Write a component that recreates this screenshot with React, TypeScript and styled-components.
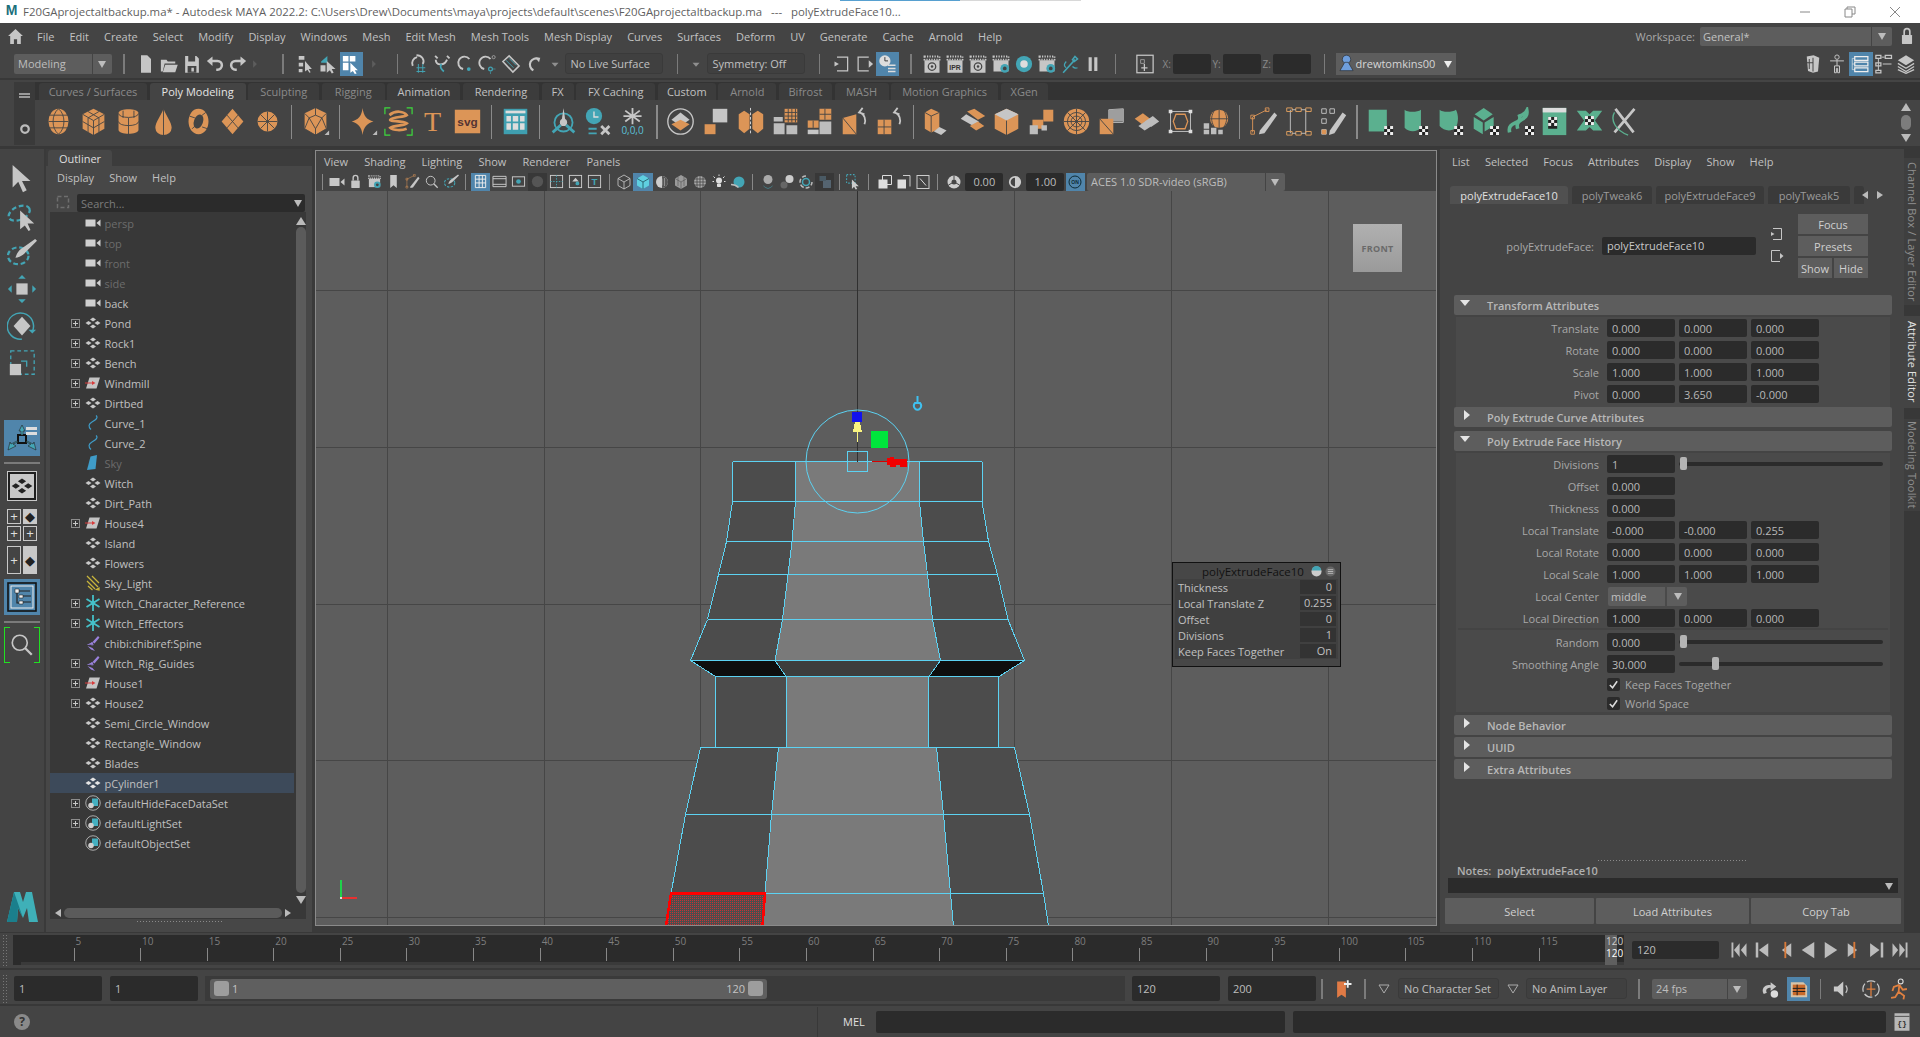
import React from 'react';
import styled, { createGlobalStyle } from 'styled-components';

const Global = createGlobalStyle`
  html, body { margin: 0; padding: 0; background: #3a3a3a; overflow: hidden; }
  * { box-sizing: border-box; }
`;

const O = '#dc9557';
const OD = '#444';
const T = '#43a5b5';
const L = '#c6c6c6';
const GR = '#5bb08f';

const check = (x: number, y: number) => (
  <g>
    <rect x={x} y={y} width="10" height="10" fill="#222" />
    <rect x={x} y={y} width="3.3" height="3.3" fill="#eee" />
    <rect x={x + 6.6} y={y} width="3.3" height="3.3" fill="#eee" />
    <rect x={x + 3.3} y={y + 3.3} width="3.3" height="3.3" fill="#eee" />
    <rect x={x} y={y + 6.6} width="3.3" height="3.3" fill="#eee" />
    <rect x={x + 6.6} y={y + 6.6} width="3.3" height="3.3" fill="#eee" />
  </g>
);
const ln = { stroke: OD, strokeWidth: 1, fill: 'none' } as const;

const icons: Record<string, React.ReactNode> = {
  // ---- shelf (32 box)
  sphere: <g><ellipse cx="16" cy="16" rx="11" ry="14" fill={O} /><path d="M16 2c-8 6-8 22 0 28M16 2c8 6 8 22 0 28M6 9h20M5 16h22M6 23h20" {...ln} /></g>,
  cube: <g><path d="M16 2l12 6v16l-12 7-12-7V8z" fill={O} /><path d="M4 8l12 7 12-7M16 15v16M10 5l12 7M22 5l-12 7M10 12v16M22 12v16M4 16l12 7 12-7" {...ln} /></g>,
  cyl: <g><path d="M5 7c0-6 22-6 22 0v18c0 6-22 6-22 0z" fill={O} /><path d="M5 7c0 6 22 6 22 0M5 16c0 6 22 6 22 0M16 12v18M10 4l0 8M22 4v8" {...ln} /></g>,
  cone: <g><path d="M16 2c3 8 9 15 9 21a9 8 0 0 1-18 0c0-6 6-13 9-21z" fill={O} /><path d="M16 2v29" {...ln} /></g>,
  torus: <g><path d="M16 2c7 0 11 7 11 14s-4 14-11 14S5 23 5 16 9 2 16 2z" fill={O} /><ellipse cx="16" cy="16" rx="5" ry="8" fill={OD} transform="rotate(20 16 16)" /><path d="M6 10l6 2M20 22l6 2M9 24l4-4M20 9l4-3" {...ln} /></g>,
  plane: <g><path d="M16 2l12 14-12 14L4 16z" fill={O} /><path d="M10 9l12 14M22 9L10 23" {...ln} /></g>,
  disc: <g><circle cx="16" cy="16" r="11" fill={O} /><path d="M5 16h22M16 5v22M8 8l16 16M24 8L8 24" {...ln} /></g>,
  plat: <g><path d="M16 1l12 6v17l-12 7-12-7V7z" fill={O} /><path d="M16 1v8M9 12l7-3 7 3-7 12zM4 7l5 5M28 7l-5 5M9 12l-5 12 12 7 12-7-5-12M16 24v7" {...ln} /><path d="M26 31h5v-5z" fill="#bbb" /></g>,
  star: <g><path d="M15 1c1 9 5 13 12 15-7 2-11 6-12 15-1-9-5-13-12-15 7-2 11-6 12-15z" fill={O} /><path d="M26 31h5v-5z" fill="#bbb" /></g>,
  helix: <g><path d="M1 8V1h6M25 1h6v7M1 24v7h6M25 31h6v-7" fill="none" stroke="#3ddc3d" strokeWidth="1.3" /><path d="M6 9c7-6 16-4 19 0-4 3-14 1-18 5-2 2 14 1 18 4-4 3-14 2-18 5 3 3 13 3 18 1" fill="none" stroke={O} strokeWidth="3" /></g>,
  tee: <text x="16" y="27" textAnchor="middle" fontFamily="'Liberation Serif', serif" fontSize="31" fill={O}>T</text>,
  svg: <g><rect x="2" y="3" width="28" height="26" fill={O} /><text x="16" y="21" textAnchor="middle" fontFamily="'Liberation Sans', sans-serif" fontWeight="700" fontSize="13" fill="#533">svg</text></g>,
  table: <g><rect x="3" y="2" width="26" height="28" fill="#3f9fb0" /><rect x="5" y="4" width="22" height="3" fill="#ddd" /><path d="M6 10h5v6H6zM13 10h6v6h-6zM21 10h5v6h-5zM6 18h5v7H6zM13 18h6v7h-6zM21 18h5v7h-5z" fill="#ddd" /></g>,
  pivot: <g><circle cx="16" cy="17" r="10" fill="none" stroke={T} strokeWidth="2" /><path d="M16 1l2 14h-4z" fill={L} /><circle cx="16" cy="17" r="4" fill={L} /><path d="M4 28l9-8M28 28l-9-8" stroke={T} strokeWidth="3" /></g>,
  clockx: <g><circle cx="11" cy="10" r="9" fill={T} /><path d="M11 5v6h5" stroke="#ddd" strokeWidth="1.5" fill="none" /><path d="M5 24h9M5 29h9" stroke={T} strokeWidth="2" /><path d="M19 21l9 9M28 21l-9 9" stroke={L} strokeWidth="3" /></g>,
  snow: <g><path d="M16 1v18M8 4l16 12M24 4L8 16M6 10h20" stroke={L} strokeWidth="2" /><text x="16" y="30" textAnchor="middle" fontFamily="'Open Sans', sans-serif" fontSize="11" fill="#5bc0d8">0,0,0</text></g>,
  merge: <g><circle cx="16" cy="16" r="14" fill="none" stroke={L} strokeWidth="1.5" /><path d="M16 6l10 8-10 7-10-7z" fill={L} /><path d="M16 14l10 5-10 7-10-7z" fill={O} /></g>,
  squares: <g><rect x="13" y="2" width="16" height="15" fill={L} /><rect x="4" y="19" width="12" height="11" fill={O} /></g>,
  mirror: <g><path d="M3 8l6-4 6 4v16l-6 5-6-5z" fill={O} /><path d="M18 8l6-4 6 4v16l-6 5-6-5z" fill={O} /><path d="M16 1v30" stroke="#ddd" strokeDasharray="3 2" /></g>,
  grid1: <g><path d="M15 2h14v15H15z" fill={O} /><path d="M3 18h12v12H3zM17 20h12v10H17zM3 11h10v5H3z" fill="#bdbdbd" /><path d="M15 6h14M15 10h14M15 14h14M19 2v15M23 2v15M27 2v15" {...ln} /></g>,
  grid2: <g><path d="M16 2h13v12H16zM3 15h12v8H3z" fill={O} /><path d="M16 16h13v14H16z" fill="#bdbdbd" /><path d="M3 25h12v5H3z" fill={L} /><path d="M22 2v12M16 8h13M9 15v8" {...ln} /></g>,
  rot1: <g><path d="M3 12L18 8v22H3z" fill={O} /><path d="M3 12l15 18" {...ln} /><path d="M22 6c5 2 7 8 5 13M25 1l-4 5 6 2" fill="none" stroke={L} strokeWidth="2" /></g>,
  rot2: <g><path d="M3 14h15v16H3z" fill={O} /><path d="M3 22h15M10 14v16" {...ln} /><path d="M22 6c5 2 7 8 5 13M25 1l-4 5 6 2" fill="none" stroke={L} strokeWidth="2" /></g>,
  extr: <g><path d="M9 2l9 4v18l-9 4-7-4V6z" fill={O} /><path d="M9 10v18M2 6l7 4 9-4" {...ln} /><path d="M18 22l8 4-6 5-8-4z" fill={L} /></g>,
  dia: <g><path d="M3 13l6-5 14 8-6 5z" fill={L} /><path d="M10 5l8-3 12 8-8 4zM13 21l9-5 7 5-9 5z" fill={O} /></g>,
  cube3: <g><path d="M16 2l13 6v16l-13 7-13-7V8z" fill={O} /><path d="M3 8l13 7 13-7-13-6z" fill={L} /><path d="M16 15v16" {...ln} /></g>,
  bridge: <g><path d="M18 3h11v13H18z" fill={O} /><path d="M6 14h12v10H6z" fill={O} /><path d="M3 20h9v10H3zM16 20h6v6h-6z" fill="#bdbdbd" /></g>,
  wheel: <g><circle cx="16" cy="16" r="14" fill={O} /><circle cx="16" cy="16" r="6" fill="none" stroke={OD} /><circle cx="16" cy="16" r="10" fill="none" stroke={OD} /><path d="M2 16h28M16 2v28M6 6l20 20M26 6L6 26" {...ln} /></g>,
  two: <g><path d="M13 3l16-1v15H13z" fill="none" stroke={L} /><path d="M13 3l16-1v14H13z" fill="#9e9e9e" /><path d="M3 13h15v17H3z" fill={O} /><path d="M3 13l15 17" {...ln} /></g>,
  dia2: <g><path d="M3 13l9-6 8 6-9 6z" fill={O} /><path d="M14 16l9-6 7 6-9 6zM7 21l9-6 7 5-9 6z" fill="#bdbdbd" /></g>,
  frame: <g><path d="M5 5h22v22H5z" fill="none" stroke={L} /><path d="M11 8h10l3 8-3 8H11l-3-8z" fill="none" stroke={O} strokeWidth="1.4" /><path d="M3 3h4v4H3zM25 3h4v4h-4zM3 25h4v4H3zM25 25h4v4h-4z" fill="#ddd" /></g>,
  gsph: <g><circle cx="20" cy="13" r="10" fill={O} /><path d="M10 13h20M20 3v20M14 5c-3 6-3 10 0 16M26 5c3 6 3 10 0 16" {...ln} /><path d="M3 18h6v6H3zM11 23h6v7h-6zM3 25h6v5H3zM19 25h5v5h-5z" fill="#bdbdbd" /></g>,
  pen1: <g><path d="M4 28V11L20 3" fill="none" stroke={O} /><path d="M2 26h4v4H2zM2 9h4v4H2zM18 1h4v4h-4z" fill="none" stroke={O} /><path d="M12 26l16-20 3 3-14 20-6 1z" fill={L} /></g>,
  pen2: <g><path d="M7 3v26M24 3v26" stroke={L} /><path d="M3 1h6v4H3zM13 1h6v4h-6zM24 1h6v4h-6zM3 27h6v4H3zM13 27h6v4h-6zM24 27h6v4h-6z" fill="none" stroke="#e6a360" /><path d="M9 3h4M19 3h5M9 29h4M19 29h5" stroke={L} /></g>,
  pen3: <g><path d="M3 2h5v5H3zM12 2h5v5h-5zM3 13h5v5H3zM3 25h5v5H3z" fill="none" stroke={L} /><path d="M3 25h5v5H3z" fill={O} /><path d="M12 26l14-20 4 3-13 20-6 2z" fill={L} /></g>,
  mk1: <g><path d="M3 3h20v24H3z" fill={GR} />{check(20, 21)}</g>,
  mk2: <g><path d="M4 3c3 3 14 3 18 0v20c-4 5-14 5-18 0z" fill={GR} />{check(20, 21)}</g>,
  mk3: <g><path d="M4 3c3 3 14 3 18 0 3 6 3 13 0 20-6 5-14 3-18-2z" fill={GR} />{check(20, 21)}</g>,
  mk4: <g><path d="M14 1l10 7-10 7L4 8z" fill={GR} /><path d="M3 11l10 6v13L3 24zM15 17l10-6v10l-10 6z" fill={GR} />{check(21, 21)}</g>,
  mk5: <g><path d="M4 28c-3-13 14-8 11-18 6-2 8-6 8-6 2 12-14 8-10 20" fill="none" stroke={GR} strokeWidth="4" />{check(21, 21)}</g>,
  mk6: <g><rect x="3" y="1" width="26" height="30" fill={GR} /><rect x="3" y="1" width="26" height="5" fill="#ddd" />{check(9, 11)}<rect x="9" y="21" width="10" height="3" fill="#222" /></g>,
  mk7: <g><path d="M2 4h10l4 4 4-4h10l-8 11 8 11H20l-4-4-4 4H2l8-11z" fill={GR} />{check(11, 10)}</g>,
  mk8: <g><path d="M5 28L27 2M6 2l20 26" stroke={L} strokeWidth="3" /><path d="M5 6C0 14 6 26 20 31" fill="none" stroke={GR} strokeWidth="1.5" /></g>,
  // ---- status line
  fnew: <path d="M8 2h10l6 6v22H8z" fill={L} />,
  fopen: <g><path d="M3 9h9l2 3h12v3H9l-3 13H3z" fill={L} /><path d="M10 17h20l-4 12H6z" fill={L} /></g>,
  fsave: <g><path d="M5 3h18l4 4v23H5z" fill={L} /><path d="M10 3h11v9H10zM9 19h14v11H9z" fill="#444" /><rect x="15" y="22" width="4" height="6" fill={L} /></g>,
  undo: <g><path d="M11 11h9a7 7 0 0 1 0 14h-2" fill="none" stroke={L} strokeWidth="4" /><path d="M12 4v15L3 11z" fill={L} /></g>,
  redo: <g><path d="M21 11h-9a7 7 0 0 0 0 14h2" fill="none" stroke={L} strokeWidth="4" /><path d="M20 4v15l9-8z" fill={L} /></g>,
  tri: <path d="M11 6l10 10-10 10z" fill="#5d5d5d" />,
  tdn: <path d="M8 13h16l-8 9z" fill="#8f8f8f" />,
  selH: <g><path d="M6 3h9v6H6zM6 14h7v6H6zM6 24h6v5H6z" fill={L} /><path d="M16 11v17l4-3 3 5 2-1-3-5h5z" fill={L} /></g>,
  selO: <g><path d="M5 12l10-9v11H5z" fill={T} /><path d="M14 11v19l5-4 3 5 3-1-3-6h6z" fill={L} /><path d="M4 18h8v10H4z" fill={L} /></g>,
  selC: <g><path d="M3 3h9v9H3zM14 3h9v9h-9zM3 14h9v12H3z" fill="#fff" /><path d="M15 14v16l4-3 3 5 3-1-3-5h5z" fill="#fff" /></g>,
  mag1: <g><path d="M13 5a10 10 0 0 0-7 14" fill="none" stroke={L} strokeWidth="3" /><path d="M12 2c8 0 14 7 10 14" fill="none" stroke={L} strokeWidth="3" /><path d="M12 22h14M12 28h14M15 16v14M22 16v14" stroke={T} strokeWidth="1.5" /></g>,
  mag2: <g><path d="M6 9c0 9 14 11 18 0" fill="none" stroke={L} strokeWidth="3" /><path d="M5 3l4 4M24 3l4 4" stroke={L} strokeWidth="3" /><path d="M15 16c-3 4 0 9 4 12" fill="none" stroke={T} strokeWidth="3" /></g>,
  mag3: <g><path d="M23 8a10 10 0 1 0-10 16" fill="none" stroke={L} strokeWidth="3" /><circle cx="22" cy="24" r="3" fill={T} /></g>,
  mag4: <g><path d="M20 8a10 10 0 1 0-10 16" fill="none" stroke={L} strokeWidth="3" /><circle cx="25" cy="5" r="2.5" fill="none" stroke={L} /><circle cx="20" cy="24" r="3" fill="none" stroke={T} strokeWidth="2" /><path d="M20 28v4M24 24h4" stroke={T} /></g>,
  mag5: <g><path d="M3 12l10-9 16 16-10 10z" fill="none" stroke={L} strokeWidth="2.4" /><path d="M8 10l12 12M13 7l11 11" stroke={T} strokeWidth="1.4" /></g>,
  mag6: <g><path d="M24 8A10 10 0 1 0 15 26" fill="none" stroke={L} strokeWidth="3.4" /><path d="M18 6l8 0-2 7z" fill={L} /></g>,
  inp: <g><path d="M8 5h17v22H8" fill="none" stroke={L} strokeWidth="2" /><path d="M4 12l7 4-7 4z" fill={L} /></g>,
  outp: <g><path d="M22 5H5v22h17" fill="none" stroke={L} strokeWidth="2" /><path d="M22 10l7 6-7 6z" fill={L} /></g>,
  hist: <g><circle cx="11" cy="11" r="9" fill="#ddd" /><path d="M11 5v6h5" stroke="#333" strokeWidth="1.5" fill="none" /><path d="M16 18h12M16 23h12M16 28h12" stroke="#ddd" strokeWidth="2.4" /></g>,
  clap: <g><path d="M4 4h24v5H4z" fill="none" stroke={L} strokeDasharray="2 2" strokeWidth="3" /><rect x="4" y="10" width="24" height="20" fill={L} /><circle cx="16" cy="20" r="6" fill="none" stroke="#444" strokeWidth="2" /><circle cx="16" cy="20" r="2" fill="#444" /></g>,
  clapI: <g><path d="M4 4h24v5H4z" fill="none" stroke={L} strokeDasharray="2 2" strokeWidth="3" /><rect x="4" y="10" width="24" height="20" fill={L} /><text x="16" y="25" textAnchor="middle" fontFamily="'Liberation Sans', sans-serif" fontSize="11" fontWeight="700" fill="#333">IPR</text></g>,
  clapG: <g><path d="M4 4h24v5H4z" fill="none" stroke={L} strokeDasharray="2 2" strokeWidth="3" /><rect x="4" y="10" width="24" height="18" fill={L} /><circle cx="22" cy="23" r="7" fill={T} /><circle cx="22" cy="23" r="3" fill="#444" /></g>,
  ring: <g><circle cx="16" cy="16" r="13" fill={T} /><circle cx="16" cy="16" r="6" fill="#ddd" /></g>,
  brk: <g><path d="M5 30L24 9M24 4l4 4-5 4-3-3z" stroke={T} strokeWidth="2.5" fill="none" /><path d="M10 12c-4 4-4 8 0 10M20 20c4 4 8 2 8 2" stroke={T} fill="none" strokeWidth="2" /></g>,
  pause: <path d="M9 5h5v22H9zM18 5h5v22h-5z" fill={L} />,
  lockin: <g><rect x="3" y="2" width="26" height="28" fill="none" stroke={L} strokeWidth="2" /><path d="M9 9h6v6H9z" fill="none" stroke={L} /><path d="M15 16v11M10 22h10" stroke={L} strokeWidth="2" /></g>,
  user: <g><circle cx="16" cy="9" r="7" fill="#6e9edc" stroke="#222" /><path d="M13 14h6l8 14H5z" fill="#6e9edc" stroke="#222" /></g>,
  head: <g><path d="M6 4l11-2 9 4-2 22-8 2-8-3z" fill={L} /><path d="M10 8v16M16 6v22M6 14h10" stroke="#444" strokeWidth="1.6" /></g>,
  hik: <g><circle cx="16" cy="5" r="3.5" fill="none" stroke={L} strokeWidth="1.5" /><path d="M5 11h22M16 9v10M12 19h8v11h-3v-7h-2v7h-3z" stroke={L} strokeWidth="1.6" fill="none" /></g>,
  attrs: <g><path d="M6 4h21v6H6zM6 13h21v6H6zM6 22h21v6H6z" fill="none" stroke="#eee" strokeWidth="2" /><path d="M2 7h4M2 7v18M2 16h4M2 25h4" stroke="#eee" /></g>,
  tool: <g><path d="M3 2h8v5H3zM18 2h10v5H18zM3 14h8v5H3zM3 26h8v4H3z" fill="none" stroke={L} strokeWidth="2" /><path d="M12 5h5M7 8v18M14 16h14" stroke={L} strokeWidth="1.6" /></g>,
  layers: <g><path d="M16 2l13 8-13 8-13-8z" fill={L} /><path d="M3 15l13 8 13-8M3 20l13 8 13-8M3 25l13 6 13-6" fill="none" stroke={L} strokeWidth="2" /></g>,
  wlock: <g><path d="M11 14v-6a5 5 0 0 1 10 0v6" fill="none" stroke={L} strokeWidth="3" /><rect x="7" y="14" width="18" height="16" rx="1" fill={L} /></g>,
  home: <path d="M16 2l14 13h-4v15h-7v-9h-6v9H6V15H2z" fill={L} />,
  // ---- toolbox
  select: <path d="M6 1v24l6-6 5 11 4-2-5-10h9z" fill={L} />,
  lasso: <g><ellipse cx="13" cy="13" rx="12" ry="7" transform="rotate(-25 13 13)" fill="none" stroke={T} strokeWidth="2.4" strokeDasharray="5 3" /><path d="M14 10v20l5-4 4 6 2-1-3-7h7z" fill={L} /></g>,
  paint: <g><ellipse cx="12" cy="19" rx="11" ry="9" fill="none" stroke={T} strokeWidth="2.4" strokeDasharray="5 3" /><path d="M30 1l2 2-12 12c-3 4-8 6-11 6 1-3 3-8 7-10z" fill={L} /></g>,
  move: <g><rect x="10" y="10" width="12" height="12" fill={L} /><path d="M16 1l4 4h-8zM16 31l4-4h-8zM1 16l4-4v8zM31 16l-4-4v8z" fill={T} /></g>,
  rotate: <g><path d="M16 6l9 10-9 10-9-10z" fill={L} /><path d="M27 22A14 14 0 1 0 16 30" fill="none" stroke={T} strokeWidth="1.6" /><path d="M23 20h8l-4 4z" fill={T} /></g>,
  scale: <g><rect x="4" y="3" width="25" height="25" fill="none" stroke={T} strokeWidth="1.4" strokeDasharray="4 3" /><rect x="3" y="17" width="12" height="12" fill={L} /><path d="M15 14h6v6" fill="none" stroke={T} strokeWidth="1.4" /></g>,
  manip: <g><rect x="12" y="13" width="8" height="8" fill="none" stroke="#111" strokeWidth="2" /><path d="M16 3l3 6h-2v4h-2V9h-2z" fill={T} stroke="#222" strokeWidth=".6" /><path d="M2 28l8-4-3-2 5-2-1-1-6 3-1-2zM30 28l-8-4 3-2-5-2 1-1 6 3 1-2z" fill={T} stroke="#222" strokeWidth=".6" /><path d="M20 5h11v3H20zM20 10h11v3H20z" fill="#ddd" /></g>,
  diam4: <path d="M16 5l6 4-6 4-6-4zM7 12l6 4-6 4-6-4zM25 12l6 4-6 4-6-4zM16 19l6 4-6 4-6-4z" />,
  outl: <g><rect x="2" y="2" width="28" height="28" fill="none" stroke="#111" strokeWidth="1.6" /><rect x="5" y="5" width="22" height="22" fill="none" stroke="#eee" strokeWidth="1" /><path d="M9 8h4v4H9zM13 14h4v3h-4zM13 20h4v3h-4z" fill="#eee" stroke="#111" strokeWidth=".5" /><path d="M13 10h11M17 15h8M17 21h8M11 12v10h2" stroke="#222" strokeWidth="1.2" fill="none" /></g>,
  search: <g><circle cx="13" cy="13" r="10" fill="none" stroke={L} strokeWidth="2.2" /><path d="M20 20l9 9" stroke={L} strokeWidth="3" /></g>,
};

const Svg = styled.svg<{ $s: number }>`
  width: ${p => p.$s}px;
  height: ${p => p.$s}px;
  display: block;
  flex: none;
`;
const Icon = ({ n, s = 22, c }: { n: string; s?: number; c?: string }) => (
  <Svg $s={s} viewBox="0 0 32 32" fill={c}>{icons[n]}</Svg>
);

const App_ = styled.div`
  width: 1920px;
  height: 1037px;
  background: #3a3a3a;
  display: flex;
  flex-direction: column;
  overflow: hidden;
  font-family: "Open Sans", "Liberation Sans", sans-serif;
  font-size: 11px;
  color: #bdbdbd;
  position: relative;
`;

/* ---------- title ---------- */
const TitleBar = styled.div`
  height: 23px;
  flex: none;
  background: #fff;
  display: flex;
  align-items: center;
  padding: 0 3px;
  position: relative;
`;
const TitleAccent = styled.div`
  position: absolute;
  top: 0;
  left: 840px;
  width: 241px;
  height: 1px;
  background: linear-gradient(90deg, #57a0d0 0 50%, #d8d8d8 50%);
`;
const Logo = styled.div`
  width: 17px;
  height: 18px;
  color: #1c6f7c;
  font: 700 14px/14px "Liberation Sans", sans-serif;
  text-align: center;
  margin-right: 3px;
`;
const TitleText = styled.div`
  color: #5f5f5f;
  font-size: 11.4px;
  white-space: pre;
  flex: 1;
`;
const WinBtn = styled.div`
  width: 45px;
  display: flex;
  justify-content: center;
  color: #777;
`;
const WinSvg = styled.svg`
  width: 12px;
  height: 12px;
`;

/* ---------- menu ---------- */
const MenuBar = styled.div`
  height: 26px;
  flex: none;
  background: #444;
  display: flex;
  align-items: center;
  padding: 0 4px 0 7px;
  color: #c2c2c2;
`;
const MainMenu = styled.div`
  display: flex;
  gap: 15px;
  margin-left: 13px;
  flex: 1;
`;
const WsLabel = styled.span`
  margin-right: 5px;
  color: #a9a9a9;
`;
const WsField = styled.div`
  width: 192px;
  height: 19px;
  background: #5d5d5d;
  border-radius: 2px;
  display: flex;
  align-items: center;
  padding-left: 3px;
  position: relative;
  margin-right: 6px;
`;
const DropTri = styled.i<{ $c?: string; $r?: number }>`
  position: absolute;
  right: ${p => p.$r ?? 6}px;
  top: 50%;
  margin-top: -3px;
  border-left: 4.5px solid transparent;
  border-right: 4.5px solid transparent;
  border-top: 7px solid ${p => p.$c ?? '#bcbcbc'};
`;
const DropDiv = styled.i<{ $r: number }>`
  position: absolute;
  right: ${p => p.$r}px;
  top: 0;
  bottom: 0;
  width: 1px;
  background: #444;
`;

/* ---------- status ---------- */
const StatusLine = styled.div`
  height: 31px;
  flex: none;
  background: #444;
  border-bottom: 2px solid #383838;
  display: flex;
  align-items: center;
  padding-left: 14px;
`;
const Dropdown = styled.div<{ $w: number; $h?: number }>`
  width: ${p => p.$w}px;
  height: ${p => p.$h ?? 20}px;
  flex: none;
  background: #5d5d5d;
  border-radius: 2px;
  position: relative;
  display: flex;
  align-items: center;
  padding-left: 4px;
  color: #bdbdbd;
`;
const Sep = styled.div<{ $l?: number; $r?: number; $h?: number }>`
  width: 1.5px;
  height: ${p => p.$h ?? 20}px;
  flex: none;
  background: #7b7b7b;
  margin-left: ${p => p.$l ?? 0}px;
  margin-right: ${p => p.$r ?? 0}px;
`;
const Tool = styled.div<{ $w?: number; $on?: boolean; $dark?: boolean; $h?: number }>`
  width: ${p => p.$w ?? 23}px;
  height: ${p => p.$h ?? 24}px;
  flex: none;
  display: flex;
  align-items: center;
  justify-content: center;
  background: ${p => (p.$on ? '#5085ab' : p.$dark ? '#383838' : 'transparent')};
`;
const Gap = styled.div<{ $w: number }>`
  width: ${p => p.$w}px;
  flex: none;
`;
const ReadBox = styled.div<{ $w: number }>`
  width: ${p => p.$w}px;
  height: 21px;
  flex: none;
  border: 1px solid #3a3a3a;
  border-radius: 3px;
  background: #404040;
  display: flex;
  align-items: center;
  padding-left: 5px;
  color: #c0c0c0;
  white-space: nowrap;
`;
const XLabel = styled.span`
  width: 10px;
  flex: none;
  color: #8a8a8a;
  font-size: 10px;
`;
const XField = styled.div`
  width: 38px;
  height: 20px;
  background: #2b2b2b;
  border-radius: 2px;
  flex: none;
`;
const UserBox = styled.div`
  width: 120px;
  height: 22px;
  flex: none;
  background: #5d5d5d;
  display: flex;
  align-items: center;
  padding-left: 1px;
  position: relative;
  color: #d6d6d6;
`;
const RightIcons = styled.div`
  margin-left: auto;
  display: flex;
  margin-right: 3px;
`;

/* ---------- shelf ---------- */
const Shelf = styled.div`
  height: 69px;
  flex: none;
  display: flex;
  background: #444;
  border-bottom: 3px solid #383838;
  padding: 2px 0 0 14px;
`;
const ShelfHandle = styled.div`
  width: 21px;
  flex: none;
  margin-bottom: 1px;
  background: #3a3a3a;
  display: flex;
  flex-direction: column;
  align-items: center;
  justify-content: space-between;
  padding: 11px 0 10px;
`;
const HandleBars = styled.div`
  width: 11px;
  height: 5px;
  border-top: 2px solid #9a9a9a;
  border-bottom: 2px solid #9a9a9a;
`;
const ShelfMain = styled.div`
  flex: 1;
  display: flex;
  flex-direction: column;
`;
const TabStrip = styled.div`
  height: 18px;
  background: #333;
  display: flex;
  align-items: flex-end;
  padding-left: 4px;
  gap: 2.6px;
  flex: none;
`;
const ShelfTab = styled.div<{ $w: number; $on?: boolean; $dim?: boolean }>`
  width: ${p => p.$w}px;
  height: 17px;
  flex: none;
  border-radius: 3px 3px 0 0;
  background: ${p => (p.$on ? '#444' : '#3c3c3c')};
  color: ${p => (p.$on ? '#e4e4e4' : p.$dim ? '#8a8a8a' : '#c0c0c0')};
  display: flex;
  align-items: center;
  justify-content: center;
  white-space: nowrap;
`;
const ShelfIcons = styled.div`
  flex: 1;
  display: flex;
  align-items: center;
  padding: 0 0 3px 6.6px;
  position: relative;
`;
const SCell = styled.div`
  width: 34.8px;
  height: 36px;
  flex: none;
  display: flex;
  align-items: center;
  justify-content: center;
`;
const ShelfSep = styled.div`
  width: 1.5px;
  height: 34px;
  background: #8a8a8a;
  flex: none;
  margin: 0 5.75px;
`;
const ShelfScroll = styled.div`
  position: absolute;
  right: 8px;
  top: 3px;
  bottom: 4px;
  width: 12px;
  display: flex;
  flex-direction: column;
  align-items: center;
  justify-content: space-between;
`;
const UpTri = styled.i`
  border-left: 5px solid transparent;
  border-right: 5px solid transparent;
  border-bottom: 8px solid #bbb;
`;
const DownTri = styled.i`
  border-left: 5px solid transparent;
  border-right: 5px solid transparent;
  border-top: 8px solid #bbb;
`;
const ScrollDot = styled.i`
  width: 10px;
  height: 15px;
  border-radius: 5px;
  background: #7c7c7c;
`;

/* ---------- workspace ---------- */
const Workspace = styled.div`
  flex: 1;
  display: flex;
  min-height: 0;
`;
const ToolBox = styled.div`
  width: 44px;
  flex: none;
  background: #444;
  display: flex;
  flex-direction: column;
  align-items: center;
  padding-top: 12px;
`;
const TBTool = styled.div<{ $h?: number }>`
  height: ${p => p.$h ?? 36.7}px;
  width: 36px;
  display: flex;
  align-items: center;
  justify-content: center;
  flex: none;
`;
const BlueTool = styled.div<{ $t?: number }>`
  width: 36px;
  height: 36px;
  background: #5085ab;
  display: flex;
  align-items: center;
  justify-content: center;
  flex: none;
  margin-top: ${p => p.$t ?? 0}px;
`;
const TBSep = styled.div<{ $t?: number; $b?: number }>`
  width: 36px;
  height: 2px;
  background: #7a7a7a;
  flex: none;
  margin-top: ${p => p.$t ?? 6}px;
  margin-bottom: ${p => p.$b ?? 8}px;
`;
const LayoutBox = styled.div`
  width: 28px;
  height: 28px;
  background: #c8c8c8;
  border: 2px solid #1f1f1f;
  outline: 1px solid #c8c8c8;
  display: flex;
  align-items: center;
  justify-content: center;
  flex: none;
`;
const QuadLayout = styled.div<{ $t: number }>`
  width: 30px;
  height: 28px;
  display: grid;
  grid-template-columns: 1fr 1fr;
  grid-template-rows: 1fr 1fr;
  gap: 2px;
  flex: none;
  margin-top: ${p => p.$t}px;
`;
const PlusCell = styled.div<{ $fill?: boolean }>`
  border: 1px solid #c8c8c8;
  background: ${p => (p.$fill ? '#c8c8c8' : 'transparent')};
  color: ${p => (p.$fill ? '#222' : '#ddd')};
  display: flex;
  align-items: center;
  justify-content: center;
  font: 13px/1 "Liberation Sans", sans-serif;
`;
const TwinLayout = styled.div`
  width: 30px;
  height: 28px;
  display: grid;
  grid-template-columns: 1fr 1fr;
  gap: 2px;
  flex: none;
  margin-top: 9px;
`;
const SearchTool = styled.div`
  width: 36px;
  height: 36px;
  flex: none;
  display: flex;
  align-items: center;
  justify-content: center;
  background:
    linear-gradient(#21e021, #21e021) 0 0 / 6px 1px no-repeat,
    linear-gradient(#21e021, #21e021) 100% 0 / 6px 1px no-repeat,
    linear-gradient(#21e021, #21e021) 0 100% / 6px 1px no-repeat,
    linear-gradient(#21e021, #21e021) 100% 100% / 6px 1px no-repeat,
    linear-gradient(#21e021, #21e021) 0 0 / 1px 100% no-repeat,
    linear-gradient(#21e021, #21e021) 100% 0 / 1px 100% no-repeat;
`;
const MLogo = styled.svg`
  width: 33px;
  height: 31px;
  margin-top: auto;
  margin-bottom: 10px;
  flex: none;
`;

/* ---------- outliner ---------- */
const OutlinerCol = styled.div`
  width: 266px;
  flex: none;
  margin-left: 2px;
  display: flex;
  flex-direction: column;
  background: #3c3c3c;
  padding-top: 1px;
`;
const OutTab = styled.div`
  width: 64px;
  height: 16px;
  margin-left: 2px;
  background: #474747;
  border-radius: 3px 3px 0 0;
  color: #dedede;
  display: flex;
  align-items: center;
  justify-content: center;
  flex: none;
`;
const OutPanel = styled.div`
  flex: 1;
  min-height: 0;
  background: #474747;
  display: flex;
  flex-direction: column;
  padding: 0 4px 0 4px;
`;
const OutMenu = styled.div`
  height: 22px;
  flex: none;
  display: flex;
  align-items: center;
  gap: 15px;
  padding-left: 7px;
  color: #c0c0c0;
`;
const SearchRow = styled.div`
  height: 24px;
  flex: none;
  display: flex;
  align-items: flex-start;
  padding-top: 6px;
`;
const SearchIco = styled.div`
  width: 27px;
  padding-left: 5px;
  flex: none;
`;
const SearchBox = styled.div`
  width: 228px;
  height: 18px;
  background: #2b2b2b;
  border-radius: 2px;
  color: #7c7c7c;
  padding-left: 4px;
  display: flex;
  align-items: center;
  position: relative;
  flex: none;
`;
const TreeWrap = styled.div`
  flex: 1;
  min-height: 0;
  display: flex;
  position: relative;
  padding-bottom: 13px;
`;
const Tree = styled.div`
  width: 246px;
  flex: none;
  background: #383838;
  padding-top: 1px;
  padding-right: 2px;
`;
const VScroll = styled.div`
  width: 10px;
  flex: none;
  background: #383838;
  display: flex;
  flex-direction: column;
  align-items: center;
  padding: 5px 0 0;
`;
const VThumb = styled.div`
  width: 10px;
  height: 666px;
  background: #5b5b5b;
  border-radius: 5px;
  margin: 2px 0 3px;
  flex: none;
`;
const HScroll = styled.div`
  position: absolute;
  left: 0;
  bottom: 13px;
  width: 256px;
  height: 12px;
  background: #383838;
  display: flex;
  align-items: center;
  padding: 0 5px;
  gap: 3px;
`;
const HThumb = styled.div`
  width: 218px;
  height: 10px;
  background: #5b5b5b;
  border-radius: 5px;
`;
const LeftTri = styled.i`
  border-top: 4px solid transparent;
  border-bottom: 4px solid transparent;
  border-right: 6px solid #bbb;
`;
const RightTri = styled.i`
  border-top: 4px solid transparent;
  border-bottom: 4px solid transparent;
  border-left: 6px solid #bbb;
`;
const Row = styled.div<{ $sel?: boolean; $dim?: boolean }>`
  height: 20px;
  display: flex;
  align-items: center;
  white-space: nowrap;
  background: ${p => (p.$sel ? '#3d4a5a' : 'transparent')};
  color: ${p => (p.$dim ? '#6c6c6c' : '#c0c0c0')};
`;
const Exp = styled.div<{ $show?: boolean }>`
  width: 9px;
  height: 9px;
  margin-left: 21px;
  flex: none;
  border: 1px solid ${p => (p.$show ? '#8d8d8d' : 'transparent')};
  position: relative;
  ${p => p.$show && `
    background:
      linear-gradient(#c8c8c8, #c8c8c8) 50% 50% / 5px 1px no-repeat,
      linear-gradient(#c8c8c8, #c8c8c8) 50% 50% / 1px 5px no-repeat;
  `}
`;
const RowIcon = styled.div`
  width: 16px;
  margin-left: 5px;
  margin-right: 3.5px;
  flex: none;
  display: flex;
  justify-content: center;
`;
const Gutter = styled.div`
  width: 3px;
  flex: none;
  background: #3a3a3a;
`;
const DotStrip = styled.div<{ $w: number; $m?: string }>`
  width: ${p => p.$w}px;
  height: 1px;
  flex: none;
  margin: ${p => p.$m ?? '0 auto'};
  background: repeating-linear-gradient(90deg, #8a8a8a 0 1px, transparent 1px 3px);
`;

/* ---------- view ---------- */
const ViewPane = styled.div`
  width: 1122px;
  margin-top: 1px;
  margin-bottom: 6px;
  flex: none;
  background: #444;
  border: 1px solid #8a8a8a;
  display: flex;
  flex-direction: column;
`;
const ViewMenu = styled.div`
  height: 21px;
  flex: none;
  display: flex;
  align-items: center;
  gap: 16.2px;
  padding-left: 8px;
  color: #c0c0c0;
`;
const ViewBar = styled.div`
  height: 19px;
  flex: none;
  display: flex;
  align-items: center;
  padding-left: 1px;
`;
const VT = styled(Tool)`
  width: 19.1px;
  height: 18px;
`;
const VSep = styled.div`
  width: 1px;
  height: 16px;
  background: #888;
  flex: none;
  margin: 0 4.5px;
`;
const NumField = styled.div<{ $w?: number }>`
  width: ${p => p.$w ?? 38}px;
  height: 18px;
  background: #2b2b2b;
  border-radius: 2px;
  flex: none;
  display: flex;
  align-items: center;
  justify-content: center;
  color: #bdbdbd;
`;
const Viewport = styled.div`
  flex: 1;
  position: relative;
  overflow: hidden;
  background: #5d5d5d;
`;
const Scene = styled.svg`
  width: 100%;
  height: 100%;
  display: block;
`;
const ViewCube = styled.div`
  position: absolute;
  left: 1037px;
  top: 33px;
  width: 49px;
  height: 48px;
  background: linear-gradient(#b0b0b0, #9a9a9a);
  color: #6a6a6a;
  font-weight: 700;
  font-size: 9px;
  display: flex;
  align-items: center;
  justify-content: center;
  letter-spacing: .3px;
`;
const Hud = styled.div`
  position: absolute;
  left: 856px;
  top: 371px;
  width: 169px;
  height: 105px;
  background: #474747;
  border: 1px solid #111;
  display: flex;
  flex-direction: column;
  padding: 0 2px;
`;
const HudTitle = styled.div`
  height: 16px;
  flex: none;
  color: #121212;
  font-size: 11.5px;
  display: flex;
  align-items: center;
  justify-content: center;
  padding-right: 7px;
  position: relative;
`;
const HudDots = styled.div`
  position: absolute;
  right: 2px;
  top: 3px;
  display: flex;
  gap: 3px;
`;
const HudRow = styled.div`
  height: 16px;
  flex: none;
  display: flex;
  align-items: center;
  justify-content: space-between;
  color: #c0c0c0;
  padding-left: 3px;
  background: #404040;
`;
const HudVal = styled.div`
  width: 36px;
  height: 14px;
  background: #333;
  text-align: right;
  padding-right: 4px;
  line-height: 14px;
  margin-right: 2px;
`;

/* ---------- attribute editor ---------- */
const AEPanel = styled.div`
  width: 464px;
  margin-left: 0;
  flex: none;
  background: #444;
  display: flex;
  flex-direction: column;
`;
const AEMenu = styled.div`
  height: 24px;
  flex: none;
  display: flex;
  align-items: center;
  gap: 15.2px;
  padding-left: 12px;
  color: #c0c0c0;
`;
const AETabs = styled.div`
  height: 18px;
  margin-top: 13px;
  margin-left: 10px;
  flex: none;
  display: flex;
  align-items: flex-end;
  gap: 4px;
  position: relative;
`;
const AETab = styled.div<{ $w: number; $on?: boolean }>`
  width: ${p => p.$w}px;
  height: 18px;
  flex: none;
  background: ${p => (p.$on ? '#505050' : '#3a3a3a')};
  color: ${p => (p.$on ? '#e0e0e0' : '#9a9a9a')};
  border-radius: 3px 3px 0 0;
  display: flex;
  align-items: center;
  justify-content: center;
`;
const TabArrows = styled.div`
  position: absolute;
  right: 21px;
  top: 5px;
  display: flex;
  gap: 9px;
`;
const AEHead = styled.div`
  height: 91px;
  flex: none;
  display: flex;
  padding-top: 10px;
`;
const NameCol = styled.div`
  width: 154px;
  text-align: right;
  padding-top: 25px;
  color: #a8a8a8;
  flex: none;
`;
const NameInput = styled.div`
  width: 154px;
  height: 18px;
  margin: 23px 0 0 8px;
  background: #2b2b2b;
  border-radius: 2px;
  padding-left: 5px;
  color: #c8c8c8;
  line-height: 18px;
  flex: none;
`;
const ArrowCol = styled.div`
  width: 42px;
  flex: none;
  display: flex;
  flex-direction: column;
  align-items: center;
  gap: 6px;
  padding: 12px 0 0 0;
`;
const BtnGrid = styled.div`
  width: 70px;
  height: 64px;
  display: grid;
  grid-template-columns: 34px 34px;
  grid-auto-rows: 20px;
  gap: 2px;
  flex: none;
`;
const Btn = styled.div<{ $span?: boolean }>`
  background: #5d5d5d;
  grid-column: ${p => (p.$span ? 'span 2' : 'auto')};
  color: #d0d0d0;
  display: flex;
  align-items: center;
  justify-content: center;
`;
const Sections = styled.div`
  padding: 0 0 0 14px;
  width: 452px;
  flex: 1;
  display: flex;
  flex-direction: column;
`;
const Section = styled.div<{ $t?: number }>`
  height: 20px;
  flex: none;
  background: #5d5d5d;
  border-radius: 2px;
  display: flex;
  align-items: center;
  margin-top: ${p => p.$t ?? 2}px;
  font-weight: 600;
  color: #b8b8b8;
`;
const SecArrow = styled.div`
  width: 33px;
  padding-left: 6px;
  flex: none;
`;
const TriDown = styled.i`
  display: block;
  width: 0;
  border-left: 5.5px solid transparent;
  border-right: 5.5px solid transparent;
  border-top: 6px solid #e4e4e4;
  margin-top: -4px;
`;
const TriRight = styled.i`
  display: block;
  width: 0;
  margin-left: 4px;
  margin-top: -4px;
  border-top: 5.5px solid transparent;
  border-bottom: 5.5px solid transparent;
  border-left: 6px solid #e4e4e4;
`;
const Frame = styled.div`
  width: 434px;
  margin: 2px 0 0 2px;
  background: #4a4a4a;
  display: flex;
  flex-direction: column;
  padding-top: 2px;
`;
const ARow = styled.div<{ $b?: number }>`
  height: 18px;
  flex: none;
  display: flex;
  align-items: center;
  margin-bottom: ${p => p.$b ?? 4}px;
`;
const ALabel = styled.div`
  width: 143px;
  flex: none;
  text-align: right;
  margin-right: 8px;
  color: #a8a8a8;
  white-space: nowrap;
`;
const AInput = styled.div`
  width: 68px;
  height: 18px;
  flex: none;
  background: #2b2b2b;
  border-radius: 2px;
  margin-right: 4px;
  padding-left: 5px;
  color: #b8b8b8;
  line-height: 19px;
`;
const Slider = styled.div`
  width: 204px;
  height: 4px;
  background: #2b2b2b;
  border-radius: 2px;
  position: relative;
  flex: none;
`;
const Thumb = styled.i`
  position: absolute;
  top: -5px;
  width: 7px;
  height: 13px;
  background: #b4b4b4;
  border-radius: 2px;
`;
const Divider = styled.div`
  height: 2px;
  margin: -3px 0 3px 2px;
  width: 430px;
  background: #444;
  flex: none;
`;
const ComboBox = styled.div`
  width: 79px;
  height: 19px;
  margin: 0 0 0 1px;
  display: flex;
  flex: none;
  gap: 2px;
`;
const ComboText = styled.div`
  width: 57px;
  background: #5d5d5d;
  border-radius: 2px 0 0 2px;
  padding-left: 3px;
  line-height: 19px;
  color: #c0c0c0;
`;
const ComboArrow = styled.div`
  flex: 1;
  background: #5d5d5d;
  border-radius: 0 2px 2px 0;
  position: relative;
`;
const CheckRow = styled.div<{ $b: number }>`
  height: 13px;
  margin: 0 0 ${p => p.$b}px 151px;
  display: flex;
  align-items: center;
  gap: 5px;
  flex: none;
  color: #a8a8a8;
`;
const CheckBox = styled.div`
  width: 13px;
  height: 13px;
  background: #2b2b2b;
  border-radius: 2px;
  display: flex;
  align-items: center;
  justify-content: center;
  flex: none;
`;
const NotesArea = styled.div`
  margin-top: auto;
  flex: none;
  display: flex;
  flex-direction: column;
`;
const NotesLabel = styled.div`
  height: 14px;
  padding-left: 17px;
  font-weight: 600;
  color: #b0b0b0;
  line-height: 14px;
`;
const NotesField = styled.div`
  height: 15px;
  margin-left: 8px;
  width: 450px;
  background: #2b2b2b;
  position: relative;
`;
const BottomBtns = styled.div`
  display: flex;
  gap: 2px;
  padding: 5px 0 8px 5px;
`;
const BigBtn = styled.div<{ $w: number }>`
  width: ${p => p.$w}px;
  height: 26px;
  background: #5d5d5d;
  color: #d0d0d0;
  border-radius: 1px;
  display: flex;
  align-items: center;
  justify-content: center;
`;
const SideTabs = styled.div`
  width: 16px;
  flex: none;
  background: #383838;
  display: flex;
  flex-direction: column;
  gap: 11px;
  padding-top: 9px;
`;
const SideTab = styled.div<{ $h: number; $on?: boolean }>`
  height: ${p => p.$h}px;
  width: 16px;
  writing-mode: vertical-rl;
  background: ${p => (p.$on ? '#444' : '#3f3f3f')};
  color: ${p => (p.$on ? '#e0e0e0' : '#8e8e8e')};
  display: flex;
  align-items: center;
  justify-content: center;
  white-space: nowrap;
  font-size: 11px;
  letter-spacing: .15px;
  flex: none;
`;

/* ---------- time ---------- */
const Grip = styled.div<{ $w: number }>`
  width: ${p => p.$w}px;
  flex: none;
  align-self: stretch;
  background: repeating-linear-gradient(#777 0 1px, transparent 1px 3px) 3px 2px / 1px 100% no-repeat,
    repeating-linear-gradient(#777 0 1px, transparent 1px 3px) 6px 2px / 1px 100% no-repeat;
`;
const TimeRow = styled.div`
  height: 38px;
  flex: none;
  background: #444;
  display: flex;
  align-items: center;
  padding-bottom: 1px;
  border-top: 1px solid #383838;
  border-bottom: 2px solid #383838;
`;
const Timeline = styled.div`
  width: 1611px;
  height: 30px;
  flex: none;
  background: #2b2b2b;
  display: flex;
  padding-left: 60.5px;
  position: relative;
`;
const TimelineBase = styled.i`
  position: absolute;
  left: 8px;
  right: 0;
  bottom: 0;
  height: 3px;
  background: #3a3a3a;
`;
const TickCell = styled.div`
  width: 66.6px;
  flex: none;
  height: 27px;
  position: relative;
  font-size: 10px;
  color: #7e7e7e;
  padding: 0 0 0 2px;
`;
const TickLabel = styled.div`
  height: 14px;
  line-height: 12px;
`;
const TickMark = styled.i`
  position: absolute;
  left: 0;
  top: 13px;
  width: 1px;
  height: 13px;
  background: #888;
`;
const CurFrame = styled.div`
  position: absolute;
  left: 1592px;
  top: 0;
  width: 12px;
  height: 30px;
  background: #5f5f5f;
  color: #ccc;
  font-size: 10px;
  line-height: 12px;
  padding-left: 1px;
  white-space: nowrap;
`;
const CurBright = styled.div`
  color: #fff;
`;
const TimeField = styled.div`
  width: 87px;
  height: 18px;
  margin-left: 8px;
  background: #2b2b2b;
  border-radius: 2px;
  padding-left: 5px;
  color: #bdbdbd;
  line-height: 18px;
  flex: none;
`;
const Transport = styled.div`
  display: flex;
  margin-left: 8px;
`;
const RangeRow = styled.div`
  height: 36px;
  flex: none;
  background: #444;
  display: flex;
  align-items: center;
  border-bottom: 2px solid #383838;
  padding-top: 3px;
`;
const RangeField = styled.div<{ $l?: number }>`
  width: 88px;
  height: 25px;
  flex: none;
  background: #2b2b2b;
  border-radius: 2px;
  margin-left: ${p => p.$l ?? 0}px;
  padding-left: 5px;
  line-height: 25px;
  color: #bdbdbd;
`;
const RangeTrack = styled.div`
  width: 920px;
  height: 25px;
  flex: none;
  margin-left: 7px;
  background: #3a3a3a;
  display: flex;
  align-items: center;
  padding-left: 5px;
`;
const RangeBar = styled.div`
  width: 557px;
  height: 20px;
  background: #5f5f5f;
  border-radius: 3px;
  display: flex;
  align-items: center;
  padding: 0 4px;
  color: #c4c4c4;
`;
const RangeHandle = styled.div`
  width: 15px;
  height: 15px;
  background: #9d9d9d;
  border-radius: 3px;
  flex: none;
`;
const RangeText = styled.div`
  flex: 1;
  display: flex;
  justify-content: space-between;
  padding: 0 3px;
`;
const CmdRow = styled.div`
  height: 31px;
  flex: none;
  background: #444;
  display: flex;
  align-items: center;
`;
const Help = styled.div`
  width: 16px;
  height: 16px;
  border-radius: 50%;
  background: #8a8a8a;
  color: #333;
  font-weight: 700;
  font-size: 12px;
  display: flex;
  align-items: center;
  justify-content: center;
  margin-left: 14px;
  flex: none;
`;
const CmdSpacer = styled.div`
  width: 787px;
  flex: none;
`;
const CmdDiv = styled.div`
  width: 1px;
  height: 30px;
  background: #383838;
  flex: none;
`;
const MelLabel = styled.div`
  width: 58px;
  padding-left: 25px;
  color: #e0e0e0;
  flex: none;
`;
const CmdInput = styled.div<{ $w: number; $l?: number }>`
  width: ${p => p.$w}px;
  height: 22px;
  background: #2b2b2b;
  border-radius: 2px;
  flex: none;
  margin-left: ${p => p.$l ?? 0}px;
`;

const shelfTabs: [string, number, boolean?, boolean?][] = [
  ['Curves / Surfaces', 108, false, true], ['Poly Modeling', 96, true], ['Sculpting', 71, false, true], ['Rigging', 63, false, true],
  ['Animation', 73], ['Rendering', 76], ['FX', 32], ['FX Caching', 79], ['Custom', 58], ['Arnold', 58, false, true],
  ['Bifrost', 53, false, true], ['MASH', 54, false, true], ['Motion Graphics', 107, false, true], ['XGen', 47, false, true],
];
const shelfItems = ['sphere', 'cube', 'cyl', 'cone', 'torus', 'plane', 'disc', '|', 'plat', '|', 'star', 'helix', 'tee', 'svg', '|', 'table', '|', 'pivot', 'clockx', 'snow', '|', 'merge', 'squares', 'mirror', 'grid1', 'grid2', 'rot1', 'rot2', '|', 'extr', 'dia', 'cube3', 'bridge', 'wheel', 'two', 'dia2', 'frame', 'gsph', '|', 'pen1', 'pen2', 'pen3', '|', 'mk1', 'mk2', 'mk3', 'mk4', 'mk5', 'mk6', 'mk7', 'mk8'];

const Diamond = ({ c = '#c8c8c8' }: { c?: string }) => <Icon n="diam4" s={16} c={c} />;
const Camera = () => (
  <Svg $s={16} viewBox="0 0 32 32"><path d="M1 9h20v14H1zM23 16l8-7v14z" fill="#cfcfcf" /></Svg>
);
const GroupArrow = () => (
  <Svg $s={16} viewBox="0 0 32 32"><path d="M9 5h21l-7 22H2z" fill="#c4c4c4" /><path d="M0 15h14v-3l7 4-7 4v-3H0z" fill="#d83b3b" /></Svg>
);
const Curve = () => (
  <Svg $s={16} viewBox="0 0 32 32"><path d="M22 1c6 5-3 10-8 13-7 4-8 9-2 15" fill="none" stroke="#3f9cc8" strokeWidth="2.4" /></Svg>
);
const SkyIco = () => (
  <Svg $s={16} viewBox="0 0 32 32"><path d="M11 3l13-3-3 28-17 2z" fill="#3f9cc8" /></Svg>
);
const LightIco = () => (
  <Svg $s={16} viewBox="0 0 32 32"><path d="M4 2l22 22M14 2l14 14M4 12l16 16M6 22l9 8M28 26l-5 3 5 1z" stroke="#c8b53c" strokeWidth="2.5" fill="none" /></Svg>
);
const Star = () => (
  <Svg $s={16} viewBox="0 0 32 32"><path d="M16 0v32M3 8l26 16M29 8L3 24" stroke="#45c0c8" strokeWidth="3.6" /><path d="M16 10l5 6-5 6-5-6z" fill="#45c0c8" /></Svg>
);
const Spine = () => (
  <Svg $s={16} viewBox="0 0 32 32"><path d="M26 2l3 3-10 12-4-3zM12 14l6 6-5 1zM3 20l12-6 2 5zM5 22l10 4 5 6-8-3z" fill="#9a82dc" /></Svg>
);
const SetIco = () => (
  <Svg $s={16} viewBox="0 0 32 32"><circle cx="16" cy="16" r="14.5" fill="none" stroke="#c8c8c8" strokeWidth="1.6" /><rect x="14" y="7" width="12" height="15" fill="#45b0c0" /><circle cx="12" cy="21" r="5.5" fill="#d0d0d0" /></Svg>
);

type N = { t: string; e?: boolean; i: React.ReactNode; d?: boolean; s?: boolean };
const D = <Diamond />;
const tree: N[] = [
  { t: 'persp', i: <Camera />, d: true }, { t: 'top', i: <Camera />, d: true }, { t: 'front', i: <Camera />, d: true }, { t: 'side', i: <Camera />, d: true }, { t: 'back', i: <Camera /> },
  { t: 'Pond', e: true, i: D }, { t: 'Rock1', e: true, i: D }, { t: 'Bench', e: true, i: D }, { t: 'Windmill', e: true, i: <GroupArrow /> }, { t: 'Dirtbed', e: true, i: D },
  { t: 'Curve_1', i: <Curve /> }, { t: 'Curve_2', i: <Curve /> }, { t: 'Sky', i: <SkyIco />, d: true }, { t: 'Witch', i: D }, { t: 'Dirt_Path', i: D },
  { t: 'House4', e: true, i: <GroupArrow /> }, { t: 'Island', i: D }, { t: 'Flowers', i: D }, { t: 'Sky_Light', i: <LightIco /> },
  { t: 'Witch_Character_Reference', e: true, i: <Star /> }, { t: 'Witch_Effectors', e: true, i: <Star /> }, { t: 'chibi:chibiref:Spine', i: <Spine /> }, { t: 'Witch_Rig_Guides', e: true, i: <Spine /> },
  { t: 'House1', e: true, i: <GroupArrow /> }, { t: 'House2', e: true, i: D }, { t: 'Semi_Circle_Window', i: D }, { t: 'Rectangle_Window', i: D }, { t: 'Blades', i: D },
  { t: 'pCylinder1', i: <Diamond c="#e4e4e4" />, s: true }, { t: 'defaultHideFaceDataSet', e: true, i: <SetIco /> }, { t: 'defaultLightSet', e: true, i: <SetIco /> }, { t: 'defaultObjectSet', i: <SetIco /> },
];

const levels = [
  [461.5, 732.5, 795.5, 919.5, 982], [501.5, 732.5, 795.5, 919.5, 982], [541.5, 726.5, 792, 923.5, 988.5],
  [574.5, 718.5, 788, 927.5, 997.5], [619.5, 707.5, 782.5, 932.5, 1008], [660.5, 690.5, 775, 940.5, 1024.5],
  [676.5, 715.5, 786, 929, 999], [747.5, 716, 786, 928.5, 998.5], [747.5, 700.5, 778.5, 936.5, 1014.5],
  [814.5, 685.5, 771.5, 943.5, 1029.5], [893.5, 671, 765, 950.5, 1043.5], [926, 665.5, 762.5, 953.5, 1048.5],
];
const poly = (a: number[], b: number[], i: number, j: number) => `${a[i]},${a[0]} ${a[j]},${a[0]} ${b[j]},${b[0]} ${b[i]},${b[0]}`;
const Mesh = () => (
  <Scene viewBox="316 191 1120 734" preserveAspectRatio="xMinYMin slice" shapeRendering="crispEdges">
    <defs>
      <pattern id="stip" width="2" height="2" patternUnits="userSpaceOnUse">
        <rect width="2" height="2" fill="#4d4d4d" />
        <rect width="1" height="1" fill="#c63434" />
      </pattern>
    </defs>
    {[387, 544, 700, 1014, 1171, 1328].map(x => <line key={x} x1={x + .5} x2={x + .5} y1="191" y2="925" stroke="#464646" />)}
    {[290, 447, 604, 760, 917].map(y => <line key={y} x1="316" x2="1436" y1={y + .5} y2={y + .5} stroke="#464646" />)}
    <line x1="857.5" x2="857.5" y1="191" y2="925" stroke="#303030" />
    {levels.slice(0, -1).map((a, k) => {
      const b = levels[k + 1];
      const pinch = a[0] === 660.5;
      return (
        <g key={k}>
          <polygon points={poly(a, b, 1, 2)} fill={pinch ? '#0e0e0e' : '#4c4c4c'} />
          <polygon points={poly(a, b, 2, 3)} fill={pinch ? '#3d3d3d' : '#7a7a7a'} />
          <polygon points={poly(a, b, 3, 4)} fill={pinch ? '#0e0e0e' : '#4c4c4c'} />
        </g>
      );
    })}
    <g stroke="#5cd2f2" fill="none">
      {levels.map((a, k) => <line key={k} x1={a[1]} x2={a[4]} y1={a[0]} y2={a[0]} />)}
      {[1, 2, 3, 4].map(i => <polyline key={i} points={levels.slice(0, 8).map(a => `${a[i]},${a[0]}`).join(' ')} />)}
      {[1, 2, 3, 4].map(i => <polyline key={'b' + i} points={levels.slice(8).map(a => `${a[i]},${a[0]}`).join(' ')} />)}
    </g>
    <polygon points="671,893.5 765,893.5 762.5,926 666,926" fill="url(#stip)" stroke="#ff0000" strokeWidth="2.5" />
    <line x1="857.5" x2="857.5" y1="191" y2="462" stroke="#303030" />
    <g shapeRendering="auto">
      <circle cx="857.5" cy="461.5" r="51.5" fill="none" stroke="#5cd2f2" />
      <path d="M915 403a3.5 4 0 1 0 5 0z M917.5 396v8" fill="none" stroke="#3fc0ef" strokeWidth="2" />
    </g>
    <rect x="847.5" y="451.5" width="20" height="20" fill="none" stroke="#5cd2f2" />
    <rect x="852" y="412" width="10" height="10" fill="#1212ee" />
    <path d="M855 422h5l2 10h-9z" fill="#fbf580" />
    <line x1="857.5" x2="857.5" y1="432" y2="442" stroke="#fbf580" />
    <rect x="871" y="431" width="17" height="17" fill="#00e63c" />
    <path d="M887 458h3v-1h4v2h13v8h-7v-2h-4v2h-6v-2h-3z" fill="#f20000" />
    <line x1="872" x2="887" y1="461.5" y2="461.5" stroke="#d80000" />
    <line x1="341" x2="341" y1="880" y2="898" stroke="#1fd24a" strokeWidth="2" />
    <line x1="340" x2="357" y1="898" y2="898" stroke="#e83030" strokeWidth="2" />
    <circle cx="341" cy="898" r="1.6" fill="#ddd" />
  </Scene>
);

const attrFirst = (label: string, a: string, b?: string, c?: string) => (
  <ARow>
    <ALabel>{label}</ALabel>
    <AInput>{a}</AInput>
    {b !== undefined && <AInput>{b}</AInput>}
    {c !== undefined && <AInput>{c}</AInput>}
  </ARow>
);
const Chk = () => (
  <CheckBox><Svg $s={11} viewBox="0 0 12 12"><path d="M2 6.5l3 3 5-7" fill="none" stroke="#ddd" strokeWidth="1.7" /></Svg></CheckBox>
);
const ticks = Array.from({ length: 23 }, (_, i) => (i + 1) * 5);

const play = (d: string, o = false) => (
  <Svg $s={20} viewBox="0 0 32 32">
    <path d={d} fill="#bcbcbc" />
    {o && <path d="M15 3h3v26h-3z" fill="#d87a3a" />}
  </Svg>
);

export default function App() {
  return (
    <App_>
      <Global />
      <TitleBar>
        <TitleAccent />
        <Logo>M</Logo>
        <TitleText>F20GAprojectaltbackup.ma* - Autodesk MAYA 2022.2: C:\Users\Drew\Documents\maya\projects\default\scenes\F20GAprojectaltbackup.ma   ---   polyExtrudeFace10...</TitleText>
        <WinBtn><WinSvg viewBox="0 0 12 12"><path d="M1 6h10" stroke="#888" /></WinSvg></WinBtn>
        <WinBtn><WinSvg viewBox="0 0 12 12"><path d="M1 3h7v8H1zM3 3V1h8v7H8" fill="none" stroke="#888" /></WinSvg></WinBtn>
        <WinBtn><WinSvg viewBox="0 0 12 12"><path d="M1 1l10 10M11 1L1 11" stroke="#888" /></WinSvg></WinBtn>
      </TitleBar>

      <MenuBar>
        <Icon n="home" s={17} />
        <MainMenu>
          {['File', 'Edit', 'Create', 'Select', 'Modify', 'Display', 'Windows', 'Mesh', 'Edit Mesh', 'Mesh Tools', 'Mesh Display', 'Curves', 'Surfaces', 'Deform', 'UV', 'Generate', 'Cache', 'Arnold', 'Help'].map(m => <span key={m}>{m}</span>)}
        </MainMenu>
        <WsLabel>Workspace:</WsLabel>
        <WsField>General*<DropDiv $r={20} /><DropTri /></WsField>
        <Icon n="wlock" s={18} />
      </MenuBar>

      <StatusLine>
        <Dropdown $w={98}>Modeling<DropDiv $r={19} /><DropTri /></Dropdown>
        <Sep $l={11} $r={10} />
        {['fnew', 'fopen', 'fsave', 'undo', 'redo'].map(n => <Tool key={n}><Icon n={n} s={20} /></Tool>)}
        <Tool $w={10}><Icon n="tri" s={12} /></Tool>
        <Sep $l={22.5} $r={10} />
        <Tool><Icon n="selH" s={20} /></Tool>
        <Tool><Icon n="selO" s={20} /></Tool>
        <Tool $on><Icon n="selC" s={20} /></Tool>
        <Tool><Icon n="tri" s={12} /></Tool>
        <Sep $l={11} $r={9.5} />
        {['mag1', 'mag2', 'mag3', 'mag4', 'mag5', 'mag6'].map(n => <Tool key={n}><Icon n={n} s={20} /></Tool>)}
        <Tool $w={19}><Icon n="tdn" s={14} /></Tool>
        <ReadBox $w={98}>No Live Surface</ReadBox>
        <Sep $l={14} $r={10} />
        <Tool $w={16}><Icon n="tdn" s={14} /></Tool>
        <Gap $w={2.5} />
        <ReadBox $w={98}>Symmetry: Off</ReadBox>
        <Sep $l={14} $r={10} />
        <Tool><Icon n="inp" s={20} /></Tool>
        <Tool><Icon n="outp" s={20} /></Tool>
        <Tool $on><Icon n="hist" s={20} /></Tool>
        <Sep $l={11} $r={8.5} />
        {['clap', 'clapI', 'clap', 'clapG', 'ring', 'clapG', 'brk', 'pause'].map((n, i) => <Tool key={i}><Icon n={n} s={20} /></Tool>)}
        <Sep $l={10.5} $r={18.5} />
        <Icon n="lockin" s={20} />
        <Gap $w={8} />
        <XLabel>X:</XLabel><XField />
        <Gap $w={2} />
        <XLabel>Y:</XLabel><XField />
        <Gap $w={2} />
        <XLabel>Z:</XLabel><XField />
        <Sep $l={13} $r={10.5} />
        <UserBox>
          <Icon n="user" s={19} />
          drewtomkins00
          <DropTri $c="#eee" $r={4} />
        </UserBox>
        <RightIcons>
          <Tool $w={24}><Icon n="head" s={20} /></Tool>
          <Tool $w={24}><Icon n="hik" s={20} /></Tool>
          <Tool $w={24} $on><Icon n="attrs" s={20} /></Tool>
          <Tool $w={22}><Icon n="tool" s={20} /></Tool>
          <Tool $w={22}><Icon n="layers" s={20} /></Tool>
        </RightIcons>
      </StatusLine>

      <Shelf>
        <ShelfHandle>
          <HandleBars />
          <Svg $s={12} viewBox="0 0 32 32"><circle cx="16" cy="16" r="10" fill="none" stroke="#bbb" strokeWidth="6" /></Svg>
        </ShelfHandle>
        <ShelfMain>
          <TabStrip>
            {shelfTabs.map(([t, w, on, dim]) => <ShelfTab key={t} $w={w} $on={on} $dim={dim}>{t}</ShelfTab>)}
          </TabStrip>
          <ShelfIcons>
            {shelfItems.map((n, i) => (n === '|' ? <ShelfSep key={i} /> : <SCell key={i}><Icon n={n} s={29} /></SCell>))}
            <ShelfScroll><UpTri /><ScrollDot /><DownTri /></ShelfScroll>
          </ShelfIcons>
        </ShelfMain>
      </Shelf>

      <Workspace>
        <ToolBox>
          <TBTool><Icon n="select" s={30} /></TBTool>
          <TBTool><Icon n="lasso" s={30} /></TBTool>
          <TBTool><Icon n="paint" s={30} /></TBTool>
          <TBTool><Icon n="move" s={30} /></TBTool>
          <TBTool><Icon n="rotate" s={30} /></TBTool>
          <TBTool><Icon n="scale" s={30} /></TBTool>
          <BlueTool $t={39}><Icon n="manip" s={32} /></BlueTool>
          <TBSep />
          <LayoutBox><Icon n="diam4" s={22} c="#222" /></LayoutBox>
          <QuadLayout $t={9}>
            <PlusCell>+</PlusCell><PlusCell $fill>◆</PlusCell><PlusCell>+</PlusCell><PlusCell>+</PlusCell>
          </QuadLayout>
          <TwinLayout>
            <PlusCell>+</PlusCell><PlusCell $fill>◆</PlusCell>
          </TwinLayout>
          <BlueTool $t={5}><Icon n="outl" s={32} /></BlueTool>
          <TBSep $b={4} />
          <SearchTool><Icon n="search" s={24} /></SearchTool>
          <MLogo viewBox="0 0 33 31">
            <path d="M1 31L8 1h6l3 10 3-10h6l6 30h-9l-2-14-4 10-5-10-1 14z" fill="#3fb0b8" />
            <path d="M8 1l9 26-5-10-1 14H1z" fill="#1b7f8c" />
          </MLogo>
        </ToolBox>

        <OutlinerCol>
          <OutTab>Outliner</OutTab>
          <OutPanel>
            <OutMenu><span>Display</span><span>Show</span><span>Help</span></OutMenu>
            <SearchRow>
              <SearchIco>
                <Svg $s={16} viewBox="0 0 32 32"><path d="M5 5h22v22H5z" fill="none" stroke="#6e6e6e" strokeWidth="3" strokeDasharray="8 5" /></Svg>
              </SearchIco>
              <SearchBox>Search...<DropTri $r={3} /></SearchBox>
            </SearchRow>
            <TreeWrap>
              <Tree>
                {tree.map(r => (
                  <Row key={r.t} $sel={r.s} $dim={r.d}>
                    <Exp $show={r.e} />
                    <RowIcon>{r.i}</RowIcon>
                    {r.t}
                  </Row>
                ))}
              </Tree>
              <VScroll>
                <UpTri />
                <VThumb />
                <DownTri />
              </VScroll>
              <HScroll>
                <LeftTri />
                <HThumb />
                <RightTri />
              </HScroll>
            </TreeWrap>
            <DotStrip $w={85} $m="-11px auto 10px" />
          </OutPanel>
        </OutlinerCol>
        <Gutter />

        <ViewPane>
          <ViewMenu>
            {['View', 'Shading', 'Lighting', 'Show', 'Renderer', 'Panels'].map(m => <span key={m}>{m}</span>)}
          </ViewMenu>
          <ViewBar>
            <VSep />
            <VT><Svg $s={16} viewBox="0 0 32 32"><path d="M1 8h20v16H1zM23 16l8-7v14z" fill="#c8c8c8" /></Svg></VT>
            <VT><Icon n="wlock" s={15} /></VT>
            <VT><Icon n="clapG" s={15} /></VT>
            <VT><Svg $s={15} viewBox="0 0 32 32"><path d="M9 2h14v28l-7-6-7 6z" fill="#c8c8c8" /></Svg></VT>
            <VT><Icon n="pen1" s={15} /></VT>
            <VT><Icon n="search" s={14} /></VT>
            <VT><Icon n="paint" s={15} /></VT>
            <VSep />
            <VT $on><Svg $s={15} viewBox="0 0 32 32"><path d="M5 3h22v26H5zM5 11h22M5 19h22M13 3v26M20 3v26" fill="none" stroke="#eee" strokeWidth="2" /></Svg></VT>
            <VT><Svg $s={15} viewBox="0 0 32 32"><path d="M2 5h28v22H2z M2 10h28M2 22h28" fill="none" stroke="#ccc" strokeWidth="2" /></Svg></VT>
            <VT><Svg $s={15} viewBox="0 0 32 32"><rect x="3" y="6" width="26" height="20" fill="none" stroke="#ccc" strokeWidth="2" /><circle cx="16" cy="16" r="5" fill={T} /></Svg></VT>
            <VT $dark><Svg $s={15} viewBox="0 0 32 32"><circle cx="16" cy="16" r="12" fill="#555" /></Svg></VT>
            <VT><Svg $s={15} viewBox="0 0 32 32"><rect x="3" y="3" width="26" height="26" fill="none" stroke="#ccc" strokeWidth="2" /><path d="M16 3v26M3 16h26" stroke={T} strokeWidth="2" strokeDasharray="3 3" /></Svg></VT>
            <VT><Svg $s={15} viewBox="0 0 32 32"><rect x="3" y="3" width="26" height="26" fill="none" stroke="#ccc" strokeWidth="2" /><path d="M16 8l7 8H9z" fill="#ccc" /><circle cx="20" cy="20" r="4" fill={T} /></Svg></VT>
            <VT><Svg $s={15} viewBox="0 0 32 32"><rect x="3" y="3" width="26" height="26" fill="none" stroke="#ccc" strokeWidth="2" /><text x="16" y="24" textAnchor="middle" fontSize="21" fontWeight="700" fontFamily="'Liberation Sans', sans-serif" fill={T}>T</text></Svg></VT>
            <VSep />
            <VT><Svg $s={16} viewBox="0 0 32 32"><path d="M16 2l12 7v14l-12 7-12-7V9zM4 9l12 7 12-7M16 16v14" fill="none" stroke="#ccc" strokeWidth="1.6" /></Svg></VT>
            <VT $on><Svg $s={16} viewBox="0 0 32 32"><path d="M16 2l12 7v14l-12 7-12-7V9z" fill="#5fcfe0" /><path d="M4 9l12 7 12-7M16 16v14" fill="none" stroke="#1d4f5c" strokeWidth="1.6" /></Svg></VT>
            <VT><Svg $s={16} viewBox="0 0 32 32"><circle cx="16" cy="16" r="12" fill="#ccc" /><path d="M16 4a12 12 0 0 1 0 24z" fill="#555" /><path d="M16 9v14M21 8v16" stroke="#ccc" /></Svg></VT>
            <VT><Svg $s={16} viewBox="0 0 32 32"><path d="M16 2l12 7v14l-12 7-12-7V9z" fill="#9a9a9a" /><path d="M4 9l12 7 12-7M16 16v14M10 6v18M22 6v18" fill="none" stroke="#444" /></Svg></VT>
            <VT><Svg $s={16} viewBox="0 0 32 32"><circle cx="16" cy="16" r="12" fill="#aaa" /><path d="M4 10h24M4 16h24M4 22h24M10 4v24M16 4v24M22 4v24" stroke="#444" strokeWidth="1.6" /></Svg></VT>
            <VT><Svg $s={16} viewBox="0 0 32 32"><circle cx="16" cy="13" r="6" fill="#ddd" /><path d="M13 20h6v5h-6zM16 1v3M5 5l3 3M27 5l-3 3M3 15h3M26 15h3" stroke="#ddd" strokeWidth="2" fill="#ddd" /></Svg></VT>
            <VT><Svg $s={16} viewBox="0 0 32 32"><circle cx="18" cy="16" r="11" fill={T} /><path d="M2 21c5 0 10 1 15 6" stroke="#bbb" strokeWidth="3" fill="none" /></Svg></VT>
            <VSep />
            <VT><Svg $s={16} viewBox="0 0 32 32"><circle cx="16" cy="11" r="9" fill="#aaa" /><path d="M6 22c6 8 14 8 20 0-4 9-16 9-20 0z" fill={T} /></Svg></VT>
            <VT><Svg $s={16} viewBox="0 0 32 32"><circle cx="21" cy="10" r="8" fill="#ccc" /><circle cx="10" cy="22" r="7" fill="#666" /></Svg></VT>
            <VT><Svg $s={16} viewBox="0 0 32 32"><path d="M16 4a12 12 0 1 0 12 12" fill="none" stroke="#bbb" strokeWidth="3" strokeDasharray="8 4" /><circle cx="16" cy="16" r="7" fill="none" stroke={T} strokeWidth="3" /></Svg></VT>
            <VT $dark><Svg $s={16} viewBox="0 0 32 32"><path d="M12 12h16v16H12z" fill="#556470" /><path d="M5 4h13v10H5z" fill="#4a5a64" /></Svg></VT>
            <VSep />
            <VT><Svg $s={17} viewBox="0 0 32 32"><path d="M3 3h16v16H3z" fill="none" stroke={T} strokeWidth="2" strokeDasharray="3 3" /><path d="M13 12v18l4-4 3 5 3-1-3-5h6z" fill="#ccc" /></Svg></VT>
            <VSep />
            <Gap $w={2} />
            <VT><Svg $s={16} viewBox="0 0 32 32"><path d="M11 3h18v18H11z" fill="none" stroke="#ddd" strokeWidth="2" /><path d="M3 11h18v18H3z" fill="#ddd" /></Svg></VT>
            <VT><Svg $s={16} viewBox="0 0 32 32"><path d="M14 3h14v22" fill="none" stroke="#ccc" strokeWidth="2" /><path d="M3 11h17v18H3z" fill="#ddd" /></Svg></VT>
            <VT><Svg $s={16} viewBox="0 0 32 32"><rect x="4" y="3" width="24" height="26" fill="none" stroke="#ccc" strokeWidth="2" /><path d="M10 9l12 14" stroke="#ddd" strokeWidth="2" /></Svg></VT>
            <VSep />
            <Gap $w={2} />
            <VT><Svg $s={16} viewBox="0 0 32 32"><circle cx="16" cy="16" r="13" fill="#ccc" /><circle cx="16" cy="16" r="5" fill="#444" /><path d="M16 3v8M5 22l7-4M27 22l-7-4" stroke="#444" strokeWidth="2" /></Svg></VT>
            <Gap $w={1.5} />
            <NumField>0.00</NumField>
            <Gap $w={2.5} />
            <VT><Svg $s={14} viewBox="0 0 32 32"><circle cx="16" cy="16" r="12" fill="none" stroke="#ccc" strokeWidth="4" /><path d="M16 4a12 12 0 0 1 0 24z" fill="#ccc" /></Svg></VT>
            <Gap $w={1.5} />
            <NumField>1.00</NumField>
            <Gap $w={1.5} />
            <VT $on><Svg $s={16} viewBox="0 0 32 32"><circle cx="16" cy="16" r="12" fill="none" stroke="#0e2a34" strokeWidth="2" /><text x="16" y="20" textAnchor="middle" fontSize="10" fontWeight="700" fontFamily="'Liberation Sans', sans-serif" fill="#0e2a34">ON</text></Svg></VT>
            <Gap $w={2} />
            <Dropdown $w={198} $h={18}>ACES 1.0 SDR-video (sRGB)<DropDiv $r={19} /><DropTri /></Dropdown>
          </ViewBar>
          <Viewport>
            <Mesh />
            <ViewCube>FRONT</ViewCube>
            <Hud>
              <HudTitle>
                polyExtrudeFace10
                <HudDots>
                  <Svg $s={11} viewBox="0 0 12 12"><circle cx="6" cy="6" r="5.5" fill="#ccc" /><path d="M1 5a5 5 0 0 1 10 0z" fill={T} /></Svg>
                  <Svg $s={11} viewBox="0 0 12 12"><circle cx="6" cy="6" r="5.5" fill="#666" /><path d="M3 4h6M3 6h6M3 8h6" stroke="#bbb" /></Svg>
                </HudDots>
              </HudTitle>
              {[['Thickness', '0'], ['Local Translate Z', '0.255'], ['Offset', '0'], ['Divisions', '1'], ['Keep Faces Together', 'On']].map(([a, b]) => (
                <HudRow key={a}>{a}<HudVal>{b}</HudVal></HudRow>
              ))}
            </Hud>
          </Viewport>
        </ViewPane>
        <Gutter />

        <AEPanel>
          <AEMenu>
            {['List', 'Selected', 'Focus', 'Attributes', 'Display', 'Show', 'Help'].map(m => <span key={m}>{m}</span>)}
          </AEMenu>
          <AETabs>
            <AETab $w={118} $on>polyExtrudeFace10</AETab>
            <AETab $w={80}>polyTweak6</AETab>
            <AETab $w={108}>polyExtrudeFace9</AETab>
            <AETab $w={82}>polyTweak5</AETab>
            <AETab $w={10} />
            <TabArrows><LeftTri /><RightTri /></TabArrows>
          </AETabs>
          <AEHead>
            <NameCol>polyExtrudeFace:</NameCol>
            <NameInput>polyExtrudeFace10</NameInput>
            <ArrowCol>
              <Icon n="inp" s={16} />
              <Icon n="outp" s={16} />
            </ArrowCol>
            <BtnGrid>
              <Btn $span>Focus</Btn>
              <Btn $span>Presets</Btn>
              <Btn>Show</Btn>
              <Btn>Hide</Btn>
            </BtnGrid>
          </AEHead>
          <Sections>
            <Section $t={0}><SecArrow><TriDown /></SecArrow>Transform Attributes</Section>
            <Frame>
              {attrFirst('Translate', '0.000', '0.000', '0.000')}
              {attrFirst('Rotate', '0.000', '0.000', '0.000')}
              {attrFirst('Scale', '1.000', '1.000', '1.000')}
              {attrFirst('Pivot', '0.000', '3.650', '-0.000')}
            </Frame>
            <Section $t={0}><SecArrow><TriRight /></SecArrow>Poly Extrude Curve Attributes</Section>
            <Section $t={4}><SecArrow><TriDown /></SecArrow>Poly Extrude Face History</Section>
            <Frame>
              <ARow><ALabel>Divisions</ALabel><AInput>1</AInput><Slider><Thumb style={{ left: 1 }} /></Slider></ARow>
              {attrFirst('Offset', '0.000')}
              {attrFirst('Thickness', '0.000')}
              {attrFirst('Local Translate', '-0.000', '-0.000', '0.255')}
              {attrFirst('Local Rotate', '0.000', '0.000', '0.000')}
              {attrFirst('Local Scale', '1.000', '1.000', '1.000')}
              <ARow>
                <ALabel>Local Center</ALabel>
                <ComboBox><ComboText>middle</ComboText><ComboArrow><DropTri $r={5} /></ComboArrow></ComboBox>
              </ARow>
              {attrFirst('Local Direction', '1.000', '0.000', '0.000')}
              <Divider />
              <ARow><ALabel>Random</ALabel><AInput>0.000</AInput><Slider><Thumb style={{ left: 1 }} /></Slider></ARow>
              <ARow $b={5}><ALabel>Smoothing Angle</ALabel><AInput>30.000</AInput><Slider><Thumb style={{ left: 33 }} /></Slider></ARow>
              <CheckRow $b={6}><Chk />Keep Faces Together</CheckRow>
              <CheckRow $b={2}><Chk />World Space</CheckRow>
            </Frame>
            <Section $t={3}><SecArrow><TriRight /></SecArrow>Node Behavior</Section>
            <Section><SecArrow><TriRight /></SecArrow>UUID</Section>
            <Section><SecArrow><TriRight /></SecArrow>Extra Attributes</Section>
          </Sections>
          <NotesArea>
            <DotStrip $w={148} $m="0 0 3px 158px" />
            <NotesLabel>Notes:&nbsp; polyExtrudeFace10</NotesLabel>
            <NotesField><DropTri $r={5} /></NotesField>
            <BottomBtns>
              <BigBtn $w={149}>Select</BigBtn>
              <BigBtn $w={153}>Load Attributes</BigBtn>
              <BigBtn $w={150}>Copy Tab</BigBtn>
            </BottomBtns>
          </NotesArea>
        </AEPanel>

        <SideTabs>
          <SideTab $h={147}>Channel Box / Layer Editor</SideTab>
          <SideTab $h={92} $on>Attribute Editor</SideTab>
          <SideTab $h={92}>Modeling Toolkit</SideTab>
        </SideTabs>
      </Workspace>

      <TimeRow>
        <Grip $w={13} />
        <Timeline>
          <TimelineBase />
          {ticks.map(t => (
            <TickCell key={t}>
              <TickLabel>{t}</TickLabel>
              <TickMark />
            </TickCell>
          ))}
          <CurFrame>120<CurBright>120</CurBright></CurFrame>
        </Timeline>
        <TimeField>120</TimeField>
        <Transport>
          {[['M4 4h3v24H4zM17 5L8 16l9 11zM28 5l-9 11 9 11z'], ['M6 4h4v24H6zM26 5L11 16l15 11z'], ['M26 5L11 16l15 11z', 'o'], ['M26 3L6 16l20 13z'], ['M6 3l20 13L6 29z'], ['M6 5l15 11L6 27z', 'o'], ['M5 5l15 11L5 27zM22 4h4v24h-4z'], ['M4 5l9 11-9 11zM15 5l9 11-9 11zM25 4h3v24h-3z']].map(([d, o], i) => (
            <Tool key={i} $h={22}>{play(d, !!o)}</Tool>
          ))}
        </Transport>
      </TimeRow>

      <RangeRow>
        <Grip $w={14} />
        <RangeField>1</RangeField>
        <RangeField $l={8}>1</RangeField>
        <RangeTrack>
          <RangeBar>
            <RangeHandle />
            <RangeText><span>1</span><span>120</span></RangeText>
            <RangeHandle />
          </RangeBar>
        </RangeTrack>
        <RangeField $l={7}>120</RangeField>
        <RangeField $l={8}>200</RangeField>
        <Sep $l={5} $r={11.5} />
        <Svg $s={20} viewBox="0 0 32 32"><path d="M5 4h14v26l-7-5-7 5z" fill="#e07a45" /><path d="M22 2v12M16 8h12" stroke="#eee" strokeWidth="3" /></Svg>
        <Sep $l={10} $r={12} />
        <Tool $w={13}><Svg $s={12} viewBox="0 0 12 12"><path d="M1 2h10L6 10z" fill="none" stroke="#aaa" /></Svg></Tool>
        <Gap $w={7.5} />
        <ReadBox $w={101}>No Character Set</ReadBox>
        <Tool $w={27}><Svg $s={12} viewBox="0 0 12 12"><path d="M1 2h10L6 10z" fill="none" stroke="#aaa" /></Svg></Tool>
        <ReadBox $w={101}>No Anim Layer</ReadBox>
        <Sep $l={11} $r={12.5} />
        <Dropdown $w={95}>24 fps<DropDiv $r={19} /><DropTri /></Dropdown>
        <Gap $w={11.5} />
        <Tool $w={22} $h={22}><Svg $s={20} viewBox="0 0 32 32"><path d="M6 24c-5-8 2-16 11-14v-5l9 7-9 7v-5c-5 0-9 3-6 8z" fill="#c8c8c8" /><circle cx="23" cy="24" r="6" fill="#ddd" /></Svg></Tool>
        <Gap $w={6.5} />
        <Tool $w={23} $on><Svg $s={20} viewBox="0 0 32 32"><path d="M3 5h20l6 6v18H3z" fill="#d8c4a8" /><rect x="6" y="9" width="20" height="17" fill="#c96a2a" /><path d="M6 15h20M6 20h20M13 9v17" stroke="#222" strokeWidth="1.6" /></Svg></Tool>
        <Sep $l={9.5} $r={9} />
        <Tool $w={24}><Svg $s={20} viewBox="0 0 32 32"><path d="M3 12h6l9-8v24l-9-8H3z" fill="#c8c8c8" /><path d="M22 10c3 4 3 8 0 12" stroke="#c8c8c8" strokeWidth="2" fill="none" /></Svg></Tool>
        <Gap $w={5} />
        <Tool $w={24}><Svg $s={20} viewBox="0 0 32 32"><circle cx="16" cy="16" r="13" fill="none" stroke="#c8c8c8" strokeWidth="2" strokeDasharray="14 4" /><path d="M16 5v22M9 16h14" stroke="#e08040" strokeWidth="2" /></Svg></Tool>
        <Gap $w={5} />
        <Tool $w={24}><Svg $s={22} viewBox="0 0 32 32"><circle cx="17" cy="5" r="3.5" fill="none" stroke="#ddd" strokeWidth="1.6" /><path d="M15 10l5 7 6-1M15 10l-8 3-2 6M15 10l-1 10 8 6-1 5M14 20l-5 8-6 1" fill="none" stroke="#e08040" strokeWidth="2.6" /></Svg></Tool>
      </RangeRow>

      <CmdRow>
        <Help>?</Help>
        <CmdSpacer />
        <CmdDiv />
        <MelLabel>MEL</MelLabel>
        <CmdInput $w={409} />
        <CmdInput $w={593} $l={8} />
        <Gap $w={6} />
        <Svg $s={20} viewBox="0 0 32 32"><rect x="4" y="2" width="24" height="28" fill="#b8b8b8" /><path d="M4 7h24" stroke="#444" strokeWidth="1.4" /><text x="16" y="23" textAnchor="middle" fontSize="13" fontWeight="700" fontFamily="'Liberation Mono', monospace" fill="#333">{'{}'}</text></Svg>
      </CmdRow>
    </App_>
  );
}
